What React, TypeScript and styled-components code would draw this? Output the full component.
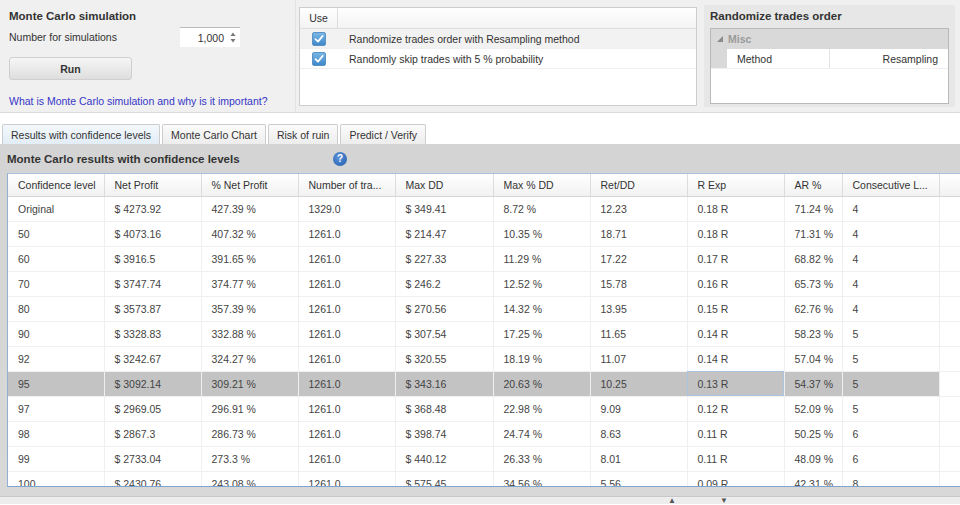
import React from "react";
import styled, { createGlobalStyle } from "styled-components";

const GlobalStyle = createGlobalStyle`
  html, body { margin: 0; padding: 0; background: #ffffff; }
  body { font-family: "Liberation Sans", Arial, sans-serif; font-size: 10.5px; color: #333; }
  * { box-sizing: border-box; }
`;

const Page = styled.div`
  width: 960px;
  height: 505px;
  overflow: hidden;
  display: flex;
  flex-direction: column;
  background: #fff;
`;

const TopArea = styled.div`
  height: 113px;
  display: flex;
  align-items: flex-start;
  background: #f0f0f0;
  border-bottom: 1px solid #dcdcdc;
  flex-shrink: 0;
`;

const LeftPanel = styled.div`
  width: 296px;
  height: 112px;
  padding: 8px 0 0 9px;
  display: flex;
  flex-direction: column;
  border-right: 1px solid #e2e2e2;
`;

const PanelTitle = styled.div`
  font-size: 11.5px;
  font-weight: bold;
  line-height: 16px;
  color: #333;
`;

const SimRow = styled.div`
  width: 231px;
  height: 20px;
  margin-top: 3px;
  display: flex;
  align-items: center;
  justify-content: space-between;
`;

const Spinner = styled.div`
  width: 60px;
  height: 20px;
  background: #fff;
  border-top: 1px solid #bbb;
  display: flex;
  align-items: center;
  justify-content: flex-end;
  padding-right: 4px;
  gap: 6px;
  color: #333;
`;

const RunButton = styled.div`
  margin-top: 10px;
  width: 123px;
  height: 23px;
  border: 1px solid #cfcfcf;
  border-radius: 3px;
  background: linear-gradient(#f6f6f6, #dedede);
  display: flex;
  align-items: center;
  justify-content: center;
  font-weight: bold;
  color: #333;
`;

const HelpLink = styled.div`
  margin-top: 14px;
  color: #3636c8;
  line-height: 14px;
`;

const MiddlePanel = styled.div`
  margin: 7px 0 0 3px;
  width: 398px;
  height: 99px;
  background: #fff;
  border: 1px solid #cdcdcd;
  display: flex;
  flex-direction: column;
`;

const GridHeader = styled.div`
  height: 21px;
  display: flex;
  background: linear-gradient(#ffffff, #f3f3f3);
  border-bottom: 1px solid #dedede;
`;

const UseCol = styled.div<{ $head?: boolean }>`
  width: 38px;
  border-right: ${(p) => (p.$head ? "1px solid #dedede" : "none")};
  display: flex;
  align-items: center;
  justify-content: center;
`;

const OptionRow = styled.div<{ $shade?: boolean }>`
  height: 20px;
  display: flex;
  align-items: center;
  background: ${(p) => (p.$shade ? "#f2f2f2" : "#ffffff")};
  border-bottom: 1px solid #f0f0f0;
`;

const OptionText = styled.div`
  padding-left: 11px;
  color: #333;
`;

const CheckBox = styled.span`
  width: 14px;
  height: 14px;
  border-radius: 2px;
  border: 1px solid #5b93c5;
  background: linear-gradient(#78b6e6, #3f88c8);
  display: flex;
  align-items: center;
  justify-content: center;
`;

const RightPanel = styled.div`
  margin: 5px 0 0 7px;
  width: 251px;
  height: 102px;
  background: #e7e7e7;
  padding: 3px 6px 0 6px;
  display: flex;
  flex-direction: column;
`;

const PropGrid = styled.div`
  margin-top: 4px;
  height: 76px;
  border: 1px solid #b9b9b9;
  background: #fff;
  display: flex;
  flex-direction: column;
`;

const PropCategory = styled.div`
  height: 20px;
  background: #d9d9d9;
  display: flex;
  align-items: center;
  padding-left: 6px;
  gap: 5px;
  color: #9a9a9a;
  font-weight: bold;
`;

const PropRow = styled.div`
  height: 20px;
  display: flex;
  border-bottom: 1px solid #efefef;
`;

const PropMargin = styled.div`
  width: 16px;
  background: #d9d9d9;
`;

const PropName = styled.div`
  width: 103px;
  border-right: 1px solid #e3e3e3;
  display: flex;
  align-items: center;
  padding-left: 10px;
  color: #333;
`;

const PropValue = styled.div`
  flex: 1;
  display: flex;
  align-items: center;
  justify-content: flex-end;
  padding-right: 10px;
  color: #333;
`;

const TabsArea = styled.div`
  height: 31px;
  display: flex;
  align-items: flex-end;
  gap: 2px;
  padding-left: 2px;
  background: #fff;
  flex-shrink: 0;
`;

const Tab = styled.div<{ $active?: boolean }>`
  height: 20px;
  padding: 0 8px;
  display: flex;
  align-items: center;
  border: 1px solid #cdcdcd;
  border-bottom: none;
  border-radius: 2px 2px 0 0;
  background: ${(p) =>
    p.$active ? "linear-gradient(#f3f8fc, #e3edf6)" : "linear-gradient(#fbfbfb, #ededed)"};
  color: #333;
`;

const ResultsPanel = styled.div`
  height: 352px;
  background: linear-gradient(#d4d4d4, #d8d8d8);
  padding-left: 7px;
  display: flex;
  flex-direction: column;
  flex-shrink: 0;
`;

const ResultsHeader = styled.div`
  height: 29px;
  display: flex;
  align-items: center;
`;

const ResultsTitle = styled.div`
  font-size: 11.5px;
  font-weight: bold;
  color: #333;
  width: 320px;
`;

const HelpIcon = styled.span`
  width: 14px;
  height: 14px;
  border-radius: 50%;
  background: radial-gradient(circle at 40% 35%, #5c92d6, #1f5caf);
  color: #fff;
  font-size: 10px;
  font-weight: bold;
  display: flex;
  align-items: center;
  justify-content: center;
  margin-left: 6px;
`;

const TableWrap = styled.div`
  height: 314px;
  background: #fff;
  border-left: 1px solid #8fb0d4;
  border-top: 1px solid #a9c2dd;
  border-bottom: 1px solid #7ea3cc;
  overflow: hidden;
`;

const Table = styled.table`
  width: 953px;
  table-layout: fixed;
  border-collapse: collapse;
`;

const HeadCell = styled.th`
  height: 22px;
  padding: 0 0 0 10px;
  text-align: left;
  font-weight: normal;
  color: #333;
  background: linear-gradient(#ffffff, #f1f1f1);
  border-right: 1px solid #dcdcdc;
  border-bottom: 1px solid #d6d6d6;
  white-space: nowrap;
  overflow: hidden;
`;

const Row = styled.tr<{ $selected?: boolean }>`
  background: ${(p) => (p.$selected ? "#c3c3c3" : "#ffffff")};
`;

const Cell = styled.td<{ $focus?: boolean; $blank?: boolean }>`
  height: 25px;
  padding: 0 0 0 10px;
  color: #444;
  border-right: 1px solid #efefef;
  border-bottom: 1px solid #f0f0f0;
  white-space: nowrap;
  overflow: hidden;
  ${(p) => (p.$focus ? "outline: 1px solid #a9c4e0; outline-offset: -1px;" : "")}
  ${(p) => (p.$blank ? "background: #ffffff; border-right: none;" : "")}
`;

const BottomGap = styled.div`
  flex: 1;
`;

const BottomBar = styled.div`
  height: 8px;
  background: #ededed;
  border-top: 1px solid #c8c8c8;
  display: flex;
  align-items: flex-end;
  justify-content: flex-start;
  padding-left: 668px;
  gap: 44px;
  color: #555;
  font-size: 8px;
  line-height: 7px;
  overflow: hidden;
`;

const columns = [
  { label: "Confidence level", w: 96 },
  { label: "Net Profit", w: 97 },
  { label: "% Net Profit", w: 97 },
  { label: "Number of tra...", w: 97 },
  { label: "Max DD", w: 98 },
  { label: "Max % DD", w: 97 },
  { label: "Ret/DD", w: 97 },
  { label: "R Exp", w: 97 },
  { label: "AR %", w: 58 },
  { label: "Consecutive L...", w: 97 },
];

const rows: string[][] = [
  ["Original", "$ 4273.92", "427.39 %", "1329.0", "$ 349.41", "8.72 %", "12.23", "0.18 R", "71.24 %", "4"],
  ["50", "$ 4073.16", "407.32 %", "1261.0", "$ 214.47", "10.35 %", "18.71", "0.18 R", "71.31 %", "4"],
  ["60", "$ 3916.5", "391.65 %", "1261.0", "$ 227.33", "11.29 %", "17.22", "0.17 R", "68.82 %", "4"],
  ["70", "$ 3747.74", "374.77 %", "1261.0", "$ 246.2", "12.52 %", "15.78", "0.16 R", "65.73 %", "4"],
  ["80", "$ 3573.87", "357.39 %", "1261.0", "$ 270.56", "14.32 %", "13.95", "0.15 R", "62.76 %", "4"],
  ["90", "$ 3328.83", "332.88 %", "1261.0", "$ 307.54", "17.25 %", "11.65", "0.14 R", "58.23 %", "5"],
  ["92", "$ 3242.67", "324.27 %", "1261.0", "$ 320.55", "18.19 %", "11.07", "0.14 R", "57.04 %", "5"],
  ["95", "$ 3092.14", "309.21 %", "1261.0", "$ 343.16", "20.63 %", "10.25", "0.13 R", "54.37 %", "5"],
  ["97", "$ 2969.05", "296.91 %", "1261.0", "$ 368.48", "22.98 %", "9.09", "0.12 R", "52.09 %", "5"],
  ["98", "$ 2867.3", "286.73 %", "1261.0", "$ 398.74", "24.74 %", "8.63", "0.11 R", "50.25 %", "6"],
  ["99", "$ 2733.04", "273.3 %", "1261.0", "$ 440.12", "26.33 %", "8.01", "0.11 R", "48.09 %", "6"],
  ["100", "$ 2430.76", "243.08 %", "1261.0", "$ 575.45", "34.56 %", "5.56", "0.09 R", "42.31 %", "8"],
];

const Check = () => (
  <CheckBox>
    <svg width="10" height="10" viewBox="0 0 10 10">
      <path d="M1.5 5.2 L4 7.6 L8.6 2" fill="none" stroke="#fff" strokeWidth="1.8" strokeLinecap="round" strokeLinejoin="round" />
    </svg>
  </CheckBox>
);

const SpinArrows = () => (
  <svg width="6" height="11" viewBox="0 0 6 11">
    <path d="M3 0.5 L5.5 4 L0.5 4 Z" fill="#777" />
    <path d="M3 10.5 L5.5 7 L0.5 7 Z" fill="#777" />
  </svg>
);

export default function App() {
  return (
    <Page>
      <GlobalStyle />
      <TopArea>
        <LeftPanel>
          <PanelTitle>Monte Carlo simulation</PanelTitle>
          <SimRow>
            <span>Number for simulations</span>
            <Spinner>
              <span>1,000</span>
              <SpinArrows />
            </Spinner>
          </SimRow>
          <RunButton>Run</RunButton>
          <HelpLink>What is Monte Carlo simulation and why is it important?</HelpLink>
        </LeftPanel>
        <MiddlePanel>
          <GridHeader>
            <UseCol $head>Use</UseCol>
          </GridHeader>
          <OptionRow $shade>
            <UseCol>
              <Check />
            </UseCol>
            <OptionText>Randomize trades order with Resampling method</OptionText>
          </OptionRow>
          <OptionRow>
            <UseCol>
              <Check />
            </UseCol>
            <OptionText>Randomly skip trades with 5 % probability</OptionText>
          </OptionRow>
        </MiddlePanel>
        <RightPanel>
          <PanelTitle>Randomize trades order</PanelTitle>
          <PropGrid>
            <PropCategory>
              <svg width="6" height="6" viewBox="0 0 6 6">
                <path d="M6 0 L6 6 L0 6 Z" fill="#8a8a8a" />
              </svg>
              <span>Misc</span>
            </PropCategory>
            <PropRow>
              <PropMargin />
              <PropName>Method</PropName>
              <PropValue>Resampling</PropValue>
            </PropRow>
          </PropGrid>
        </RightPanel>
      </TopArea>
      <TabsArea>
        <Tab $active>Results with confidence levels</Tab>
        <Tab>Monte Carlo Chart</Tab>
        <Tab>Risk of ruin</Tab>
        <Tab>Predict / Verify</Tab>
      </TabsArea>
      <ResultsPanel>
        <ResultsHeader>
          <ResultsTitle>Monte Carlo results with confidence levels</ResultsTitle>
          <HelpIcon>?</HelpIcon>
        </ResultsHeader>
        <TableWrap>
          <Table>
            <colgroup>
              {columns.map((c) => (
                <col key={c.label} style={{ width: c.w }} />
              ))}
              <col />
            </colgroup>
            <thead>
              <tr>
                {columns.map((c) => (
                  <HeadCell key={c.label}>{c.label}</HeadCell>
                ))}
                <HeadCell />
              </tr>
            </thead>
            <tbody>
              {rows.map((r) => (
                <Row key={r[0]} $selected={r[0] === "95"}>
                  {r.map((v, i) => (
                    <Cell key={i} $focus={r[0] === "95" && i === 7}>
                      {v}
                    </Cell>
                  ))}
                  <Cell $blank />
                </Row>
              ))}
            </tbody>
          </Table>
        </TableWrap>
        <BottomGap />
      </ResultsPanel>
      <BottomBar>
        <span>▲</span>
        <span>▼</span>
      </BottomBar>
    </Page>
  );
}
